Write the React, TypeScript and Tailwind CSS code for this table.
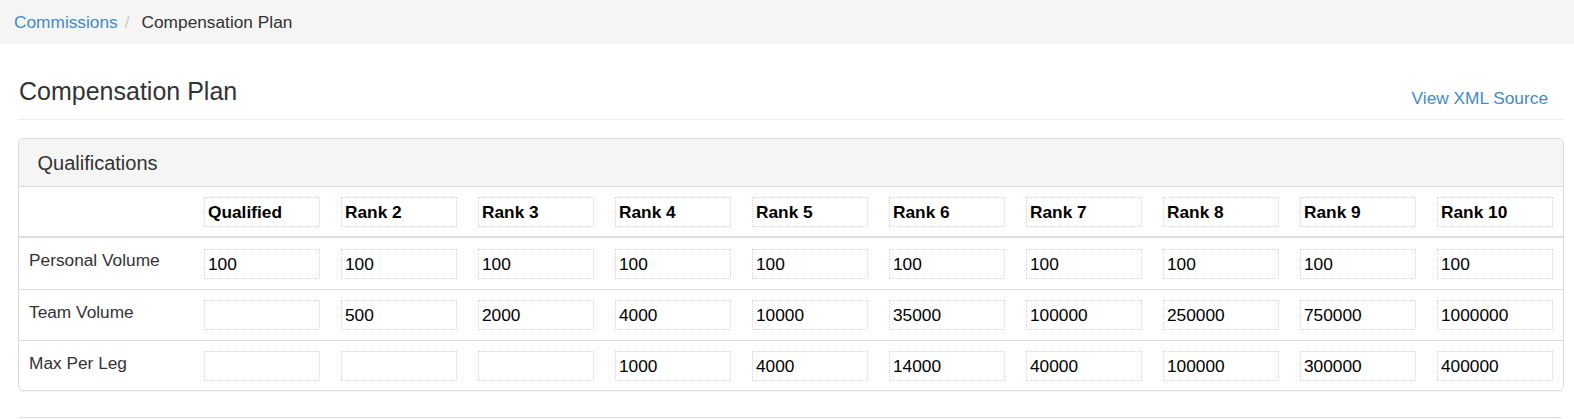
import React from 'react';

const ranks = ['Qualified', 'Rank 2', 'Rank 3', 'Rank 4', 'Rank 5', 'Rank 6', 'Rank 7', 'Rank 8', 'Rank 9', 'Rank 10'];

const rows = [
  { label: 'Personal Volume', values: ['100', '100', '100', '100', '100', '100', '100', '100', '100', '100'], pad: 'pt-[11px] pb-[10px]' },
  { label: 'Team Volume', values: ['', '500', '2000', '4000', '10000', '35000', '100000', '250000', '750000', '1000000'], pad: 'pt-[10px] pb-[10px]' },
  { label: 'Max Per Leg', values: ['', '', '', '1000', '4000', '14000', '40000', '100000', '300000', '400000'], pad: 'pt-[10px] pb-[9px]' },
];

function Cell({ value, bold = false }: { value: string; bold?: boolean }) {
  return (
    <input
      readOnly
      value={value}
      className={`block w-full h-[30px] border border-dotted border-[#d6d6d6] bg-white pl-[3px] text-[17.3px] text-black outline-none ${bold ? 'font-bold' : ''}`}
    />
  );
}

export default function App() {
  return (
    <div className="min-h-screen bg-white font-['Liberation_Sans',Arial,sans-serif] text-[#333]">
      {/* breadcrumb */}
      <div className="flex h-[44px] items-center bg-[#f5f5f5] px-[14px] text-[17.3px] leading-[25px]">
        <a href="#" className="text-[#428bca]">Commissions</a>
        <span className="ml-[7px] text-[#ccc]">/</span>
        <span className="ml-[12px] text-[#333]">Compensation Plan</span>
      </div>

      <div className="pl-[18px] pr-[10px]">
        {/* page header */}
        <div className="mt-[32px] flex items-end justify-between border-b border-[#eee] pb-[8px]">
          <h1 className="mb-[5px] pl-[1px] text-[25px] font-normal leading-[30px] text-[#333]">Compensation Plan</h1>
          <a href="#" className="pr-[16px] text-[17.3px] leading-[25px] text-[#428bca]">View XML Source</a>
        </div>

        {/* qualifications panel */}
        <div className="mt-[18px] overflow-hidden rounded-[5px] border border-[#ddd] shadow-[0_1px_1px_rgba(0,0,0,0.05)]">
          <div className="border-b border-[#ddd] bg-[#f5f5f5] px-[18.5px] pt-[12.5px] pb-[12.5px]">
            <h3 className="text-[20px] font-normal leading-[22px] text-[#333]">Qualifications</h3>
          </div>
          <table className="w-full table-fixed border-collapse text-[17.3px] leading-[25px]">
            <colgroup>
              <col className="w-[174px]" />
              {ranks.map((r) => (
                <col key={r} />
              ))}
            </colgroup>
            <thead>
              <tr className="border-b-2 border-[#ddd]">
                <th className="pt-[10px] pb-[9px]"></th>
                {ranks.map((r) => (
                  <th key={r} className="pt-[10px] pb-[9px] pl-[11px] pr-[10px]">
                    <Cell value={r} bold />
                  </th>
                ))}
              </tr>
            </thead>
            <tbody>
              {rows.map((row, i) => (
                <tr key={row.label} className={i > 0 ? 'border-t border-[#ddd]' : ''}>
                  <td className="pt-[10px] pl-[10px] align-top text-[#333]">{row.label}</td>
                  {row.values.map((v, j) => (
                    <td key={j} className={`${row.pad} pl-[11px] pr-[10px]`}>
                      <Cell value={v} />
                    </td>
                  ))}
                </tr>
              ))}
            </tbody>
          </table>
        </div>

        {/* next panel, cut off by the window */}
        <div className="mt-[26px] h-[48px] rounded-[5px] border border-[#ddd] bg-white"></div>
      </div>
    </div>
  );
}
